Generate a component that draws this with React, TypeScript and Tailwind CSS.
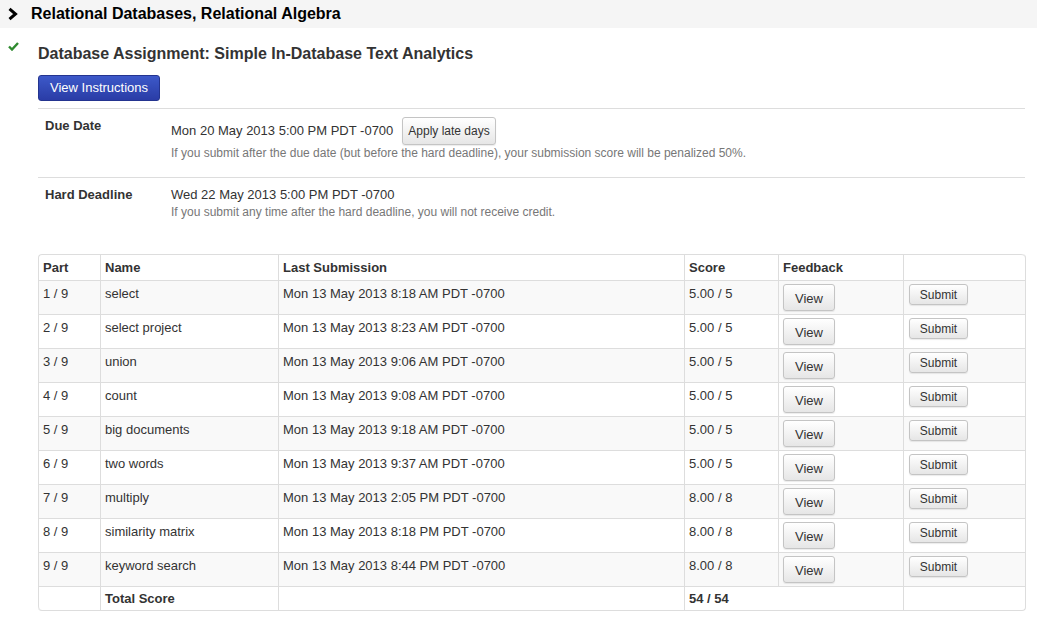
import React from "react";

type Part = {
    part: string;
    name: string;
    submitted: string;
    score: string;
};

const parts: Part[] = [
    { part: "1 / 9", name: "select", submitted: "Mon 13 May 2013 8:18 AM PDT -0700", score: "5.00 / 5" },
    { part: "2 / 9", name: "select project", submitted: "Mon 13 May 2013 8:23 AM PDT -0700", score: "5.00 / 5" },
    { part: "3 / 9", name: "union", submitted: "Mon 13 May 2013 9:06 AM PDT -0700", score: "5.00 / 5" },
    { part: "4 / 9", name: "count", submitted: "Mon 13 May 2013 9:08 AM PDT -0700", score: "5.00 / 5" },
    { part: "5 / 9", name: "big documents", submitted: "Mon 13 May 2013 9:18 AM PDT -0700", score: "5.00 / 5" },
    { part: "6 / 9", name: "two words", submitted: "Mon 13 May 2013 9:37 AM PDT -0700", score: "5.00 / 5" },
    { part: "7 / 9", name: "multiply", submitted: "Mon 13 May 2013 2:05 PM PDT -0700", score: "8.00 / 8" },
    { part: "8 / 9", name: "similarity matrix", submitted: "Mon 13 May 2013 8:18 PM PDT -0700", score: "8.00 / 8" },
    { part: "9 / 9", name: "keyword search", submitted: "Mon 13 May 2013 8:44 PM PDT -0700", score: "8.00 / 8" },
];

const greyButton =
    "rounded-[3px] border border-[#c4c4c4] bg-gradient-to-b from-[#ffffff] to-[#e6e6e6] text-[#333] shadow-[inset_0_1px_0_rgba(255,255,255,0.4),0_1px_1px_rgba(0,0,0,0.08)]";

const cell = "border-l border-t border-[#dddddd] px-[4px] align-top text-left";

export default function App() {
    return (
        <div className="min-h-[633px] bg-white font-['Liberation_Sans',Arial,sans-serif] text-[#333]">
            {/* section header */}
            <div className="flex h-[28px] items-center bg-[#f5f5f5]">
                <svg width="12" height="14" viewBox="0 0 12 14" className="ml-[7px] mr-[12px]">
                    <path d="M2.5 1.8 L8.5 7 L2.5 12.2" fill="none" stroke="#000" strokeWidth="3" />
                </svg>
                <span className="text-[16px] font-bold text-black">Relational Databases, Relational Algebra</span>
            </div>

            <div className="flex pt-[14px]">
                <div className="w-[38px] shrink-0 pl-[8px]">
                    <svg width="11" height="9" viewBox="0 0 11 9">
                        <path d="M1 4.5 L4 7.5 L10 1" fill="none" stroke="#2f8a2f" strokeWidth="2.4" />
                    </svg>
                </div>
                <div className="w-[987px] shrink-0">
                    <h1 className="text-[16px] leading-[24px] font-bold text-[#333]">
                        Database Assignment: Simple In-Database Text Analytics
                    </h1>
                    <button className="mt-[9px] h-[26px] rounded-[3px] border border-[#24348f] bg-gradient-to-b from-[#3d59c9] to-[#2a3ca6] px-[11px] text-[13px] text-white">
                        View Instructions
                    </button>

                    <div className="mt-[7px] border-t border-[#dddddd]">
                        <div className="flex pb-[16px] pt-[8px] pl-[7px]">
                            <div className="w-[126px] text-[13px] leading-[18px] font-bold">Due Date</div>
                            <div>
                                <div className="flex items-center gap-[9px] text-[13px]">
                                    <span>Mon 20 May 2013 5:00 PM PDT -0700</span>
                                    <button className={`${greyButton} h-[28px] px-[5px] text-[12px]`}>Apply late days</button>
                                </div>
                                <div className="text-[12px] leading-[16px] text-[#777]">
                                    If you submit after the due date (but before the hard deadline), your submission score will be penalized 50%.
                                </div>
                            </div>
                        </div>
                        <div className="flex border-t border-[#dddddd] pl-[7px] pt-[9px]">
                            <div className="w-[126px] text-[13px] leading-[16px] font-bold">Hard Deadline</div>
                            <div>
                                <div className="text-[13px] leading-[16px]">Wed 22 May 2013 5:00 PM PDT -0700</div>
                                <div className="mt-[1px] text-[12px] leading-[16px] text-[#777]">
                                    If you submit any time after the hard deadline, you will not receive credit.
                                </div>
                            </div>
                        </div>
                    </div>

                    <table className="mt-[34px] w-[987px] table-fixed border-separate border-spacing-0 rounded-[4px] border-r border-b border-[#dddddd] text-[13px]">
                        <colgroup>
                            <col className="w-[62px]" />
                            <col className="w-[178px]" />
                            <col className="w-[406px]" />
                            <col className="w-[94px]" />
                            <col className="w-[125px]" />
                            <col className="w-[122px]" />
                        </colgroup>
                        <thead>
                            <tr className="h-[26px]">
                                <th className={`${cell} rounded-tl-[4px] !align-bottom pb-[3px] font-bold`}>Part</th>
                                <th className={`${cell} !align-bottom pb-[3px] font-bold`}>Name</th>
                                <th className={`${cell} !align-bottom pb-[3px] font-bold`}>Last Submission</th>
                                <th className={`${cell} !align-bottom pb-[3px] font-bold`}>Score</th>
                                <th className={`${cell} !align-bottom pb-[3px] font-bold`}>Feedback</th>
                                <th className={`${cell} rounded-tr-[4px]`}></th>
                            </tr>
                        </thead>
                        <tbody>
                            {parts.map((p, i) => (
                                <tr key={p.part} className={`h-[34px] ${i % 2 === 0 ? "bg-[#f9f9f9]" : "bg-white"}`}>
                                    <td className={`${cell} pt-[3px]`}>{p.part}</td>
                                    <td className={`${cell} pt-[3px]`}>{p.name}</td>
                                    <td className={`${cell} pt-[3px]`}>{p.submitted}</td>
                                    <td className={`${cell} pt-[3px]`}>{p.score}</td>
                                    <td className={`${cell} pt-[3px]`}>
                                        <button className={`${greyButton} h-[27px] w-[52px] pt-[3px] text-[13px]`}>View</button>
                                    </td>
                                    <td className={`${cell} pt-[3px] pl-[5px]`}>
                                        <button className={`${greyButton} h-[21px] w-[59px] text-[12px]`}>Submit</button>
                                    </td>
                                </tr>
                            ))}
                            <tr className="h-[24px]">
                                <td className={`${cell} rounded-bl-[4px]`}></td>
                                <td className={`${cell} !align-bottom pb-[2px] font-bold`}>Total Score</td>
                                <td className={cell}></td>
                                <td colSpan={2} className={`${cell} !align-bottom pb-[2px] font-bold`}>54 / 54</td>
                                <td className={`${cell} rounded-br-[4px]`}></td>
                            </tr>
                        </tbody>
                    </table>
                </div>
            </div>
        </div>
    );
}
